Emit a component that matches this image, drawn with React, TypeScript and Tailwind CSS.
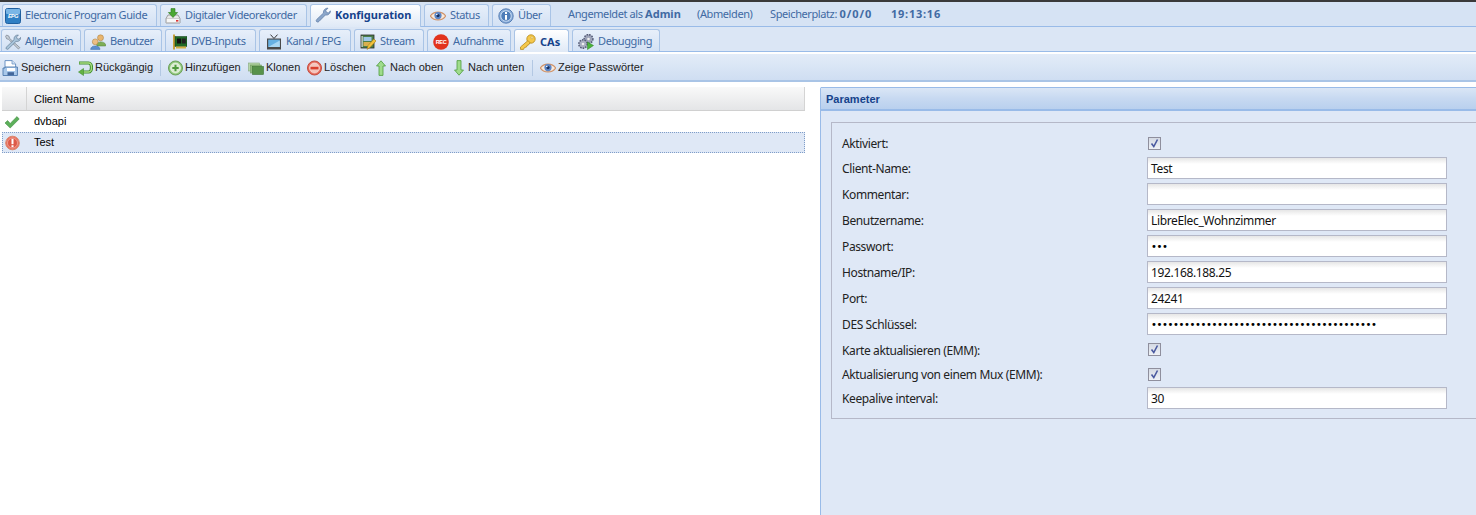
import React from "react";

const S = ({ children, w = 16, vb = "0 0 16 16" }: { children: React.ReactNode; w?: number; vb?: string }) => (
  <svg width={w} height={16} viewBox={vb} className="shrink-0">{children}</svg>
);

const Epg = () => (
  <S><rect x="0.5" y="0.5" width="15" height="15" rx="2" fill="#2f7fc4" stroke="#1f5f9f" /><rect x="1" y="1" width="14" height="5" rx="1" fill="#7ab6e6" />
    <text x="8" y="10.4" textAnchor="middle" fontSize="5.4" fontWeight="700" fontStyle="italic" fill="#fff" fontFamily="Liberation Sans, sans-serif">EPG</text></S>
);
const Dvr = () => (
  <S><path d="M1 10.5 L3 7 H13 L15 10.5 V15 H1Z" fill="#e8e8e8" stroke="#8b8b8b" strokeWidth="0.8" /><rect x="1.4" y="10.5" width="13.2" height="4.2" fill="#f7f7f7" stroke="#aaa" strokeWidth="0.5" /><rect x="11" y="12" width="2.4" height="1.6" fill="#d33" />
    <path d="M6 0.6 H10 V4.5 H12.6 L8 9.5 L3.4 4.5 H6Z" fill="#4aa832" stroke="#2d7a1c" strokeWidth="0.6" /></S>
);
const Wrench = () => (
  <S><path d="M1.5 14.5 C1 13.5 1.2 13 2 12.2 L8.5 6 C8 3.5 10 1 13 1.2 L10.8 3.4 L11.5 5.4 L13.6 6 L15.4 3.8 C15.6 6.6 13 8.6 10.4 8 L4 14.4 C3.2 15.2 2.2 15.3 1.5 14.5Z" fill="#8ba6c9" stroke="#5b7aa5" strokeWidth="0.7" /></S>
);
const Eye = () => (
  <S><path d="M0.4 8 C3.5 2.8 12.5 2.8 15.6 8 C12.5 13.2 3.5 13.2 0.4 8Z" fill="#f7e9dc" stroke="#cf9268" strokeWidth="1.1" /><circle cx="8" cy="7.6" r="3.6" fill="#5b86c8" /><circle cx="8" cy="7.6" r="1.6" fill="#17305f" /><circle cx="6.8" cy="6.5" r="0.8" fill="#fff" /></S>
);
const Info = () => (
  <S><circle cx="8" cy="8" r="7.2" fill="#8fb2de" stroke="#3f6ba6" strokeWidth="0.8" /><circle cx="8" cy="8" r="5.2" fill="#4d7cb8" stroke="#d8e6f6" strokeWidth="0.8" /><rect x="7" y="7" width="2" height="4.8" fill="#fff" /><rect x="7" y="4" width="2" height="2" fill="#fff" /></S>
);
const Tools = () => (
  <S><path d="M1.6 1 L4 2.2 L4.6 4.4 L14.8 13.6 L13.4 15 L3.6 5.4 L1.6 4.8 L0.6 2.4Z" fill="#c6ced6" stroke="#6b7480" strokeWidth="0.6" /><path d="M1 13.5 L9 5.8 C8.6 3 10.5 0.8 13.4 1 L11.5 3 L12.2 4.8 L14 5.2 L15.6 3.4 C15.8 6 13.8 8 11 7.4 L3 15.2 C2 15.8 0.6 14.6 1 13.5Z" fill="#a9c4da" stroke="#55708c" strokeWidth="0.6" /></S>
);
const Users = () => (
  <S><circle cx="10.5" cy="3.8" r="3" fill="#e8b56f" stroke="#a87a35" strokeWidth="0.5" /><path d="M6.5 10.5 C7 7 14.5 7 15.6 10.5 V12 H7Z" fill="#7dae55" stroke="#4f7f30" strokeWidth="0.5" /><circle cx="5.2" cy="7.8" r="2.9" fill="#eebf84" stroke="#a87a35" strokeWidth="0.5" /><path d="M0.6 15.4 C0.6 10.8 10 10.8 10 15.4Z" fill="#5c8fd0" stroke="#3d6aa4" strokeWidth="0.5" /></S>
);
const Card = () => (
  <S w={14} vb="0 0 14 16"><rect x="0" y="0.5" width="2" height="15" fill="#c8a23c" /><rect x="2" y="2.5" width="12" height="10" fill="#1f6a27" stroke="#0f3a12" strokeWidth="0.5" /><rect x="4" y="4.5" width="4" height="5" fill="#111" /><rect x="8.8" y="4.5" width="4" height="5" fill="#222" /><rect x="3" y="12.5" width="10" height="2" fill="#d0b040" /></S>
);
const Tv = () => (
  <S><path d="M4.5 0.6 L8 4.5 L11.5 0.6" fill="none" stroke="#333" strokeWidth="1" /><rect x="1" y="4.5" width="14" height="11" fill="#4a4a4a" /><rect x="2.2" y="5.6" width="11.6" height="7.4" fill="#66b0e2" /><path d="M2.2 13 L13.8 6.5 V13Z" fill="#a8d6f2" /></S>
);
const Film = () => (
  <S><rect x="1" y="1" width="13" height="13" fill="#4c7f4a" stroke="#2c2c2c" strokeWidth="0.8" /><rect x="3.5" y="3" width="8" height="4" fill="#9ec7e8" /><rect x="3.5" y="8" width="8" height="4" fill="#d8b050" /><rect x="1.5" y="2" width="1.2" height="11" fill="#ddd" /><path d="M7 15.4 L8 11.5 L14 5 L16 7 L10 13.5Z" fill="#f0c23c" stroke="#a57a18" strokeWidth="0.6" /></S>
);
const Rec = () => (
  <S><circle cx="8" cy="8" r="7.8" fill="#e2331d" /><text x="8" y="10" textAnchor="middle" fontSize="5.6" fontWeight="700" fill="#fff" fontFamily="Liberation Sans, sans-serif">REC</text></S>
);
const Key = () => (
  <S><circle cx="11" cy="5" r="4.2" fill="#f5c84b" stroke="#b58a1e" strokeWidth="0.8" /><circle cx="12" cy="3.8" r="1" fill="#fff4c8" stroke="#b58a1e" strokeWidth="0.4" /><path d="M8 6.5 L0.5 13 V15.4 H3.5 L4.5 13.5 L6.5 13 L7 11.5 L8.5 11 L10 8.8Z" fill="#f5c84b" stroke="#b58a1e" strokeWidth="0.8" /></S>
);
const Gears = () => (
  <S><circle cx="10.5" cy="5" r="4.4" fill="#9da3b8" stroke="#555c78" strokeWidth="1.5" strokeDasharray="1.6 1" /><circle cx="10.5" cy="5" r="1.3" fill="#eee" /><circle cx="5" cy="10" r="4.2" fill="#a8aec0" stroke="#555c78" strokeWidth="1.5" strokeDasharray="1.6 1" /><circle cx="5" cy="10" r="1.3" fill="#eee" /><path d="M9.5 8 L15.5 11.5 L9.5 15.5Z" fill="#49b43a" stroke="#2d7a1c" strokeWidth="0.5" /></S>
);
const Save = () => (
  <S><path d="M3 0.6 H10 L13.6 4 V9 H3Z" fill="#fff" stroke="#5e89bd" strokeWidth="0.9" /><path d="M10 0.6 V4 H13.6" fill="#cfe0f3" stroke="#5e89bd" strokeWidth="0.7" /><path d="M1 8 H3 V7 H15.4 V15.5 H1Z" fill="#a9c8ea" stroke="#4d78ad" strokeWidth="0.9" /><rect x="5" y="8" width="8" height="3" fill="#fff" /><rect x="5.5" y="12.2" width="6.5" height="3" fill="#44679a" /></S>
);
const Undo = () => (
  <S><path d="M2 3 H11.5 C15.5 3 15.5 12 11.5 12 H4" fill="none" stroke="#3f8e2c" strokeWidth="3.2" /><path d="M2.5 3 H11.5 C15.5 3 15.5 12 11.5 12 H4" fill="none" stroke="#a8dc82" strokeWidth="1.3" /><path d="M6.5 8.5 L1.5 12 L6.5 15.5Z" fill="#63b243" stroke="#3f8e2c" strokeWidth="0.6" /></S>
);
const Add = () => (
  <S w={15} vb="0 0 15 16"><circle cx="7.5" cy="8" r="7" fill="#8fc77a" stroke="#6a9e58" /><circle cx="7.5" cy="8" r="5" fill="#dcecd2" stroke="#f2f8ee" strokeWidth="0.6" /><path d="M7.5 4.8 V11.2 M4.3 8 H10.7" stroke="#4f9a3c" strokeWidth="2" /></S>
);
const Clone = () => (
  <S><rect x="0.5" y="3" width="11" height="8" fill="#b6d6a8" stroke="#86a97c" strokeWidth="0.6" /><rect x="2.5" y="5" width="11" height="8" fill="#8dbb7a" stroke="#6f9a5f" strokeWidth="0.6" /><rect x="4.5" y="6.5" width="11" height="8" fill="#57924a" stroke="#3e7436" strokeWidth="0.6" /></S>
);
const Del = () => (
  <S w={15} vb="0 0 15 16"><circle cx="7.5" cy="8" r="7" fill="#e56a5a" stroke="#c44c3e" /><circle cx="7.5" cy="8" r="5" fill="#f4c6bd" stroke="#fbe6e2" strokeWidth="0.6" /><rect x="3.5" y="6.8" width="8" height="2.6" fill="#d8402e" /></S>
);
const Up = () => (
  <S w={12} vb="0 0 12 16"><path d="M6 0.8 L10.5 6 H8 V15.4 H4 V6 H1.5Z" fill="#9fdc8c" stroke="#4e9c3e" strokeWidth="0.8" /></S>
);
const Down = () => (
  <S w={12} vb="0 0 12 16"><path d="M6 15.2 L10.5 10 H8 V0.6 H4 V10 H1.5Z" fill="#9fdc8c" stroke="#4e9c3e" strokeWidth="0.8" /></S>
);
const Ok = () => (
  <S><path d="M1 9 L3.6 6.6 L6.2 9.4 L13 2.6 L15.2 5 L6.2 14Z" fill="#5cb05a" stroke="#448c44" strokeWidth="0.6" /></S>
);
const Err = () => (
  <S><circle cx="7.5" cy="8" r="6.8" fill="#e8705e" stroke="#d9886f" /><circle cx="7.5" cy="8" r="5" fill="#dd5a48" stroke="#f5c0b4" strokeWidth="0.6" /><rect x="6.5" y="3.8" width="2" height="5.4" fill="#fff" /><rect x="6.5" y="10.2" width="2" height="2" fill="#fff" /></S>
);

const Tab = ({ icon, label, active, cls }: { icon: React.ReactNode; label: string; active?: boolean; cls: string }) => (
  <div className={`${cls} flex items-center gap-[4px] rounded-t-[3px] border border-b-0 border-[#a9c4e6] whitespace-nowrap overflow-hidden shrink-0 ${active ? "h-[23px] -mb-px z-10 bg-gradient-to-b from-white to-[#dfe9f6] font-bold text-[#15428b]" : "h-[22px] bg-gradient-to-b from-[#e7effa] to-[#d3e1f4] text-[#416aa3] tracking-[-0.4px]"}`}>
    {icon}
    <span>{label}</span>
  </div>
);

const Tool = ({ icon, label, cls }: { icon: React.ReactNode; label: string; cls: string }) => (
  <div className={`${cls} flex items-center whitespace-nowrap shrink-0`}>
    {icon}
    <span>{label}</span>
  </div>
);

const Sep = () => <div className="w-px h-[16px] bg-[#b3c8e3] shrink-0 mr-[7px]" />;

const Row = ({ label, children, h }: { label: string; children: React.ReactNode; h: string }) => (
  <div className={`flex items-center ${h}`}>
    <div className="w-[305px] shrink-0 pt-[2px] text-[12px] text-[#222] tracking-[-0.38px]">{label}</div>
    {children}
  </div>
);

const Input = ({ value, dots }: { value?: string; dots?: boolean }) => (
  <div className="w-[300px] h-[22px] border border-[#b5b8c8] bg-[linear-gradient(#e6e6e6,#ffffff_6px)] pl-[3px] flex items-center text-[#111] whitespace-nowrap overflow-hidden">
    {dots ? (
      <span className="text-[10px] tracking-[-0.4px] text-black" style={{ fontFamily: '"DejaVu Sans", sans-serif' }}>{value}</span>
    ) : (
      <span className="text-[12px] tracking-[-0.35px] pt-[2px]">{value}</span>
    )}
  </div>
);

const Check = () => (
  <div className="ml-[1px] w-[13px] h-[13px] border border-[#8f8f9d] bg-gradient-to-b from-[#d5dae4] to-[#eef1f6] flex items-center justify-center">
    <svg width="11" height="11" viewBox="0 0 11 11"><path d="M2.5 5.5 L4.8 8.5 L8.5 1.5" fill="none" stroke="#4a5aa0" strokeWidth="1.6" /></svg>
  </div>
);

const sans = { fontFamily: '"Liberation Sans", sans-serif' };

export default function App() {
  return (
    <div className="w-[1476px] h-[515px] overflow-hidden bg-white flex flex-col" style={{ fontFamily: '"Noto Sans", sans-serif' }}>
      <div className="h-[2px] bg-[#3a3a3a] shrink-0" />
      {/* top tabs */}
      <div className="h-[25px] shrink-0 bg-[#d6e3f4] border-b border-[#99bbe8] flex items-end pl-[2px] text-[11px]">
        <div className="flex gap-[3px] items-end">
          <Tab cls="w-[155px] pl-[2px]" icon={<Epg />} label="Electronic Program Guide" />
          <Tab cls="w-[147px] pl-[4px]" icon={<Dvr />} label="Digitaler Videorekorder" />
          <Tab cls="w-[111px] pl-[4px] pb-[2px]" active icon={<Wrench />} label="Konfiguration" />
          <Tab cls="w-[65px] pl-[5px]" icon={<Eye />} label="Status" />
          <Tab cls="w-[59px] pl-[5px]" icon={<Info />} label="Über" />
        </div>
        <div className="self-center ml-[17px] flex text-[#416aa3] whitespace-nowrap">
          <span className="w-[129px]"><span className="tracking-[-0.4px]">Angemeldet als </span><b>Admin</b></span>
          <span className="w-[73px] tracking-[-0.4px]">(Abmelden)</span>
          <span className="w-[121px]"><span className="tracking-[-0.4px]">Speicherplatz: </span><b className="tracking-[1px]">0/0/0</b></span>
          <b className="tracking-[0.75px]">19:13:16</b>
        </div>
      </div>
      {/* second tabs */}
      <div className="h-[25px] shrink-0 bg-[#dbe6f5] border-b border-[#99bbe8] flex items-end pl-[1px] gap-[3px] text-[11px]">
        <Tab cls="w-[80px] pl-[3px] pt-[2px]" icon={<Tools />} label="Allgemein" />
        <Tab cls="w-[78px] pl-[5px] pt-[2px]" icon={<Users />} label="Benutzer" />
        <Tab cls="w-[91px] pl-[7px] pt-[2px]" icon={<Card />} label="DVB-Inputs" />
        <Tab cls="w-[92px] pl-[6px] pt-[2px]" icon={<Tv />} label="Kanal / EPG" />
        <Tab cls="w-[70px] pl-[5px] pt-[2px]" icon={<Film />} label="Stream" />
        <Tab cls="w-[84px] pl-[5px] pt-[2px]" icon={<Rec />} label="Aufnahme" />
        <Tab cls="w-[55px] pl-[5px] pt-[2px]" active icon={<Key />} label="CAs" />
        <Tab cls="w-[88px] pl-[5px] pt-[2px]" icon={<Gears />} label="Debugging" />
      </div>
      {/* toolbar */}
      <div className="h-[28px] shrink-0 mt-[2px] pt-[1px] bg-gradient-to-b from-[#e3ecf8] to-[#cfdef2] border-b-2 border-[#a9c4e6] flex items-center pl-[2px] text-[11px] text-[#222]" style={sans}>
        <Tool cls="w-[75px] gap-[3px]" icon={<Save />} label="Speichern" />
        <Tool cls="w-[83px] gap-[2px]" icon={<Undo />} label="Rückgängig" />
        <Sep />
        <Tool cls="w-[80px] gap-[2px]" icon={<Add />} label="Hinzufügen" />
        <Tool cls="w-[59px] gap-[2px]" icon={<Clone />} label="Klonen" />
        <Tool cls="w-[68px] gap-[2px]" icon={<Del />} label="Löschen" />
        <Tool cls="w-[78px] gap-[3px]" icon={<Up />} label="Nach oben" />
        <Tool cls="w-[79px] gap-[3px]" icon={<Down />} label="Nach unten" />
        <Sep />
        <Tool cls="w-[105px] gap-[2px]" icon={<Eye />} label="Zeige Passwörter" />
      </div>
      {/* content */}
      <div className="flex-1 min-h-0 flex pt-[5px] bg-white">
        {/* grid */}
        <div className="w-[803px] ml-[2px] shrink-0 text-[11px] text-black" style={sans}>
          <div className="h-[24px] flex bg-gradient-to-b from-[#f9f9f9] to-[#e4e5e7] border-b border-[#d0d0d0]">
            <div className="w-[25px] border-r border-[#d4d4d4]" />
            <div className="flex-1 pl-[7px] pt-[2px] flex items-center border-r border-[#d4d4d4]">Client Name</div>
          </div>
          <div className="h-[21px] flex items-center">
            <div className="w-[25px] flex pl-[2px]"><Ok /></div>
            <div className="pl-[7px] pb-[1px]">dvbapi</div>
          </div>
          <div className="h-[21px] flex items-center bg-[#dfe8f6] border border-dotted border-[#7f9dc8]">
            <div className="w-[24px] flex pl-[2px]"><Err /></div>
            <div className="pl-[7px]">Test</div>
          </div>
        </div>
        {/* panel */}
        <div className="ml-[15px] w-[656px] shrink-0 flex flex-col border-l border-[#99bbe8] bg-[#dfe8f6] rounded-tl-[2px]">
          <div className="h-[24px] shrink-0 bg-[linear-gradient(#dae6f6,#c7d9f1_50%,#b9d0ee)] border-b-2 border-[#99bbe8] border-t border-t-[#99bbe8] pl-[5px] pt-[2px] flex items-center text-[11px] font-bold text-[#15428b]" style={sans}>
            Parameter
          </div>
          <div className="ml-[10px] mt-[11px] h-[297px] border border-r-0 border-[#b5b8c8] pl-[10px] pt-[8px] flex flex-col">
            <Row h="h-[24px]" label="Aktiviert:"><Check /></Row>
            <Row h="h-[26px]" label="Client-Name:"><Input value="Test" /></Row>
            <Row h="h-[26px]" label="Kommentar:"><Input /></Row>
            <Row h="h-[26px]" label="Benutzername:"><Input value="LibreElec_Wohnzimmer" /></Row>
            <Row h="h-[26px]" label="Passwort:"><Input dots value="•••" /></Row>
            <Row h="h-[26px]" label="Hostname/IP:"><Input value="192.168.188.25" /></Row>
            <Row h="h-[26px]" label="Port:"><Input value="24241" /></Row>
            <Row h="h-[26px]" label="DES Schlüssel:"><Input dots value="•••••••••••••••••••••••••••••••••••••••••" /></Row>
            <Row h="h-[25px]" label="Karte aktualisieren (EMM):"><Check /></Row>
            <Row h="h-[24px]" label="Aktualisierung von einem Mux (EMM):"><Check /></Row>
            <Row h="h-[24px]" label="Keepalive interval:"><Input value="30" /></Row>
          </div>
        </div>
      </div>
    </div>
  );
}
